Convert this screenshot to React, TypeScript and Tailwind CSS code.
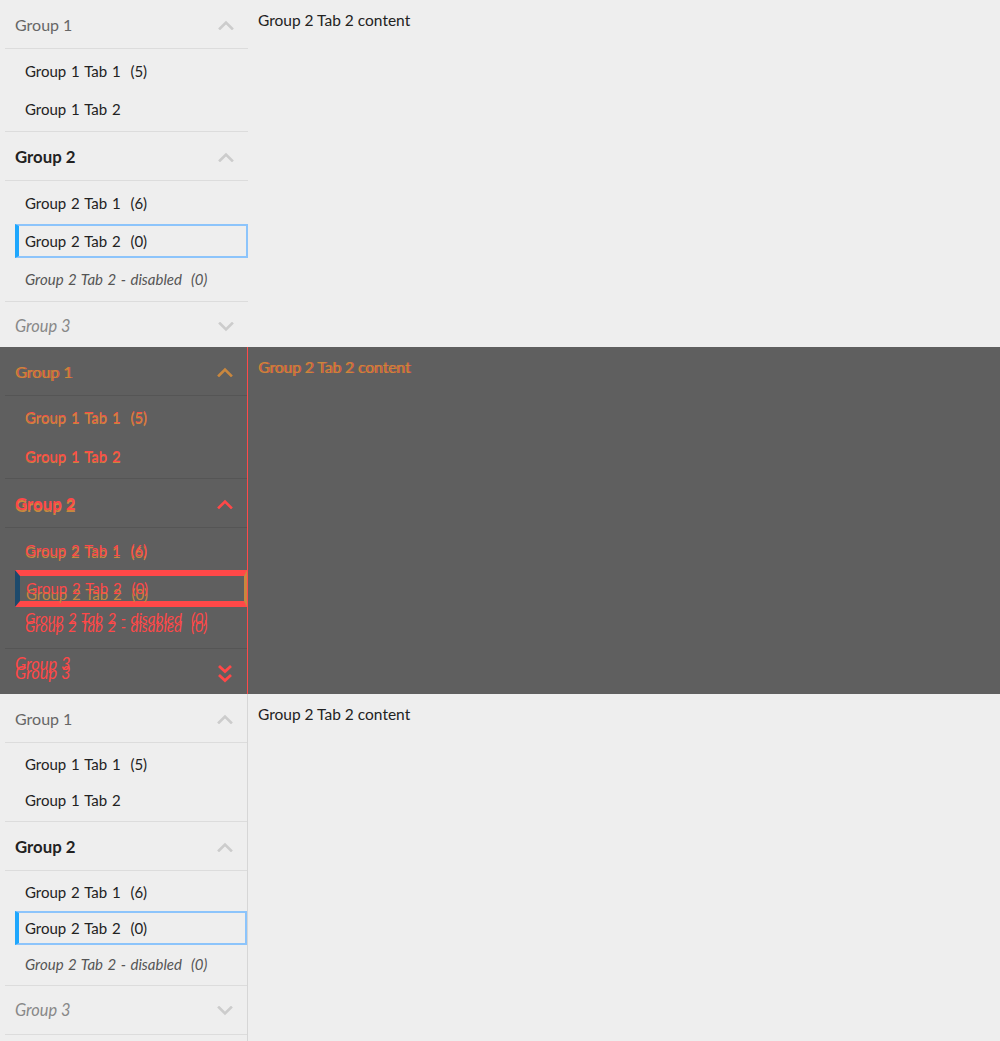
import React from 'react';

const font = "font-['Lato','Open_Sans',sans-serif]";

const ChevronUp = ({ className }: { className: string }) => (
  <svg width="16" height="10" viewBox="0 0 16 10" className={className}>
    <path d="M2 8.5 L8 2.5 L14 8.5" fill="none" stroke="currentColor" strokeWidth="2.6" strokeLinecap="square" />
  </svg>
);

const ChevronDown = ({ className }: { className: string }) => (
  <svg width="16" height="10" viewBox="0 0 16 10" className={className}>
    <path d="M2 1.5 L8 7.5 L14 1.5" fill="none" stroke="currentColor" strokeWidth="2.6" strokeLinecap="square" />
  </svg>
);

const DoubleDown = () => (
  <svg width="16" height="20" viewBox="0 0 16 20" className="text-[#ff4848]">
    <path d="M2 2 L8 7.5 L14 2" fill="none" stroke="currentColor" strokeWidth="2.8" />
    <path d="M2 11 L8 16.5 L14 11" fill="none" stroke="currentColor" strokeWidth="2.8" />
  </svg>
);

function LightPanel({ rowH, border }: { rowH: string; border: boolean }) {
  const divider = 'border-b border-[#dcdcdc]';
  const tab = `${rowH} flex items-center pl-[20px] pt-[1px] text-[15px] [word-spacing:1px] text-[#222] whitespace-pre`;
  return (
    <div className={`h-[347px] flex bg-[#eeeeee] overflow-hidden ${font}`}>
      <div className={`w-[248px] shrink-0 pl-[5px] ${border ? 'border-r border-[#d6d6d6]' : ''}`}>
        <div className={`h-[49px] flex items-center justify-between pl-[10px] pr-[14px] pt-[1px] ${divider}`}>
          <span className="text-[16px] text-[#666]">Group 1</span>
          <ChevronUp className="text-[#cccccc]" />
        </div>
        <div className={`py-[3px] ${divider}`}>
          <div className={tab}>Group 1 Tab 1  (5)</div>
          <div className={tab}>Group 1 Tab 2</div>
        </div>
        <div className={`h-[49px] flex items-center justify-between pl-[10px] pr-[14px] pt-[1px] ${divider}`}>
          <span className="text-[16.8px] font-bold text-[#222]">Group 2</span>
          <ChevronUp className="text-[#cccccc]" />
        </div>
        <div className={`py-[3px] ${divider}`}>
          <div className={tab}>Group 2 Tab 1  (6)</div>
          <div className={`${rowH} flex items-center pl-[10px]`}>
            <div className="h-[34px] w-full flex items-center pl-[6px] pt-[1px] border-2 border-[#8cc4fb] border-l-[4px] border-l-[#1ea7fd] text-[15px] [word-spacing:1px] text-[#222] whitespace-pre">
              Group 2 Tab 2  (0)
            </div>
          </div>
          <div className={`${tab} italic text-[#555]`}>Group 2 Tab 2 - disabled  (0)</div>
        </div>
        <div className={`h-[49px] flex items-center justify-between pl-[10px] pr-[14px] pt-[1px] ${divider}`}>
          <span className="text-[16.4px] italic text-[#888]">Group 3</span>
          <ChevronDown className="text-[#cccccc]" />
        </div>
      </div>
      <div className="flex-1 pl-[10px] pt-[9px] text-[15.5px] text-[#222]">Group 2 Tab 2 content</div>
    </div>
  );
}

function DiffPanel() {
  const divider = 'border-b border-[#555555]';
  const orange = 'text-[#c9873e]';
  const tab = 'h-[38px] flex items-center pl-[20px] pt-[1px] text-[15px] [word-spacing:1px] whitespace-pre';
  return (
    <div className={`h-[347px] flex bg-[#5f5f5f] overflow-hidden ${font}`}>
      <div className="w-[248px] shrink-0 pl-[5px] border-r border-[#ff4a4a]">
        <div className={`h-[49px] flex items-center justify-between pl-[10px] pr-[14px] pt-[1px] ${divider}`}>
          <span className={`text-[16px] ${orange} [text-shadow:1px_0_0_#e0553a]`}>Group 1</span>
          <ChevronUp className="text-[#c9873e]" />
        </div>
        <div className={`py-[3px] ${divider}`}>
          <div className={`${tab} ${orange} [text-shadow:0_-1px_0_#ff4848]`}>Group 1 Tab 1  (5)</div>
          <div className={`${tab} text-[#ff4848] [text-shadow:0_1px_0_#c9873e]`}>Group 1 Tab 2</div>
        </div>
        <div className={`h-[49px] flex items-center justify-between pl-[10px] pr-[14px] pt-[1px] ${divider}`}>
          <span className="text-[16.8px] font-bold text-[#ff4848] [text-shadow:0_2px_0_#c9873e]">Group 2</span>
          <ChevronUp className="text-[#ff4848]" />
        </div>
        <div className={`py-[3px] ${divider}`}>
          <div className={`${tab} text-[#ff4848] [text-shadow:0_2px_0_#c9873e]`}>Group 2 Tab 1  (6)</div>
          <div className="h-[38px] flex items-center pl-[10px]">
            <div className="h-[37px] w-full flex items-center pl-[6px] border-y-[6px] border-y-[#ff4848] border-r-[3px] border-r-[#c9873e] border-l-[5px] border-l-[#1d4a6c] text-[15px] [word-spacing:1px] text-[#ff4848] whitespace-pre [text-shadow:0_6px_0_#c9873e]">
              Group 2 Tab 2  (0)
            </div>
          </div>
          <div className={`${tab} italic text-[#ff4848] [text-shadow:0_-8px_0_#ff4848]`}>Group 2 Tab 2 - disabled  (0)</div>
        </div>
        <div className={`h-[49px] flex items-center justify-between pl-[10px] pr-[14px] pt-[1px] ${divider}`}>
          <span className="text-[16.4px] italic text-[#ff4848] [text-shadow:0_-9px_0_#ff4848]">Group 3</span>
          <DoubleDown />
        </div>
      </div>
      <div className={`flex-1 pl-[10px] pt-[9px] text-[15.5px] ${orange} [text-shadow:1px_0_0_#e0553a]`}>
        Group 2 Tab 2 content
      </div>
    </div>
  );
}

export default function App() {
  return (
    <div className="w-[1000px] h-[1041px] overflow-hidden">
      <LightPanel rowH="h-[38px]" border={false} />
      <DiffPanel />
      <LightPanel rowH="h-[36px]" border={true} />
    </div>
  );
}
